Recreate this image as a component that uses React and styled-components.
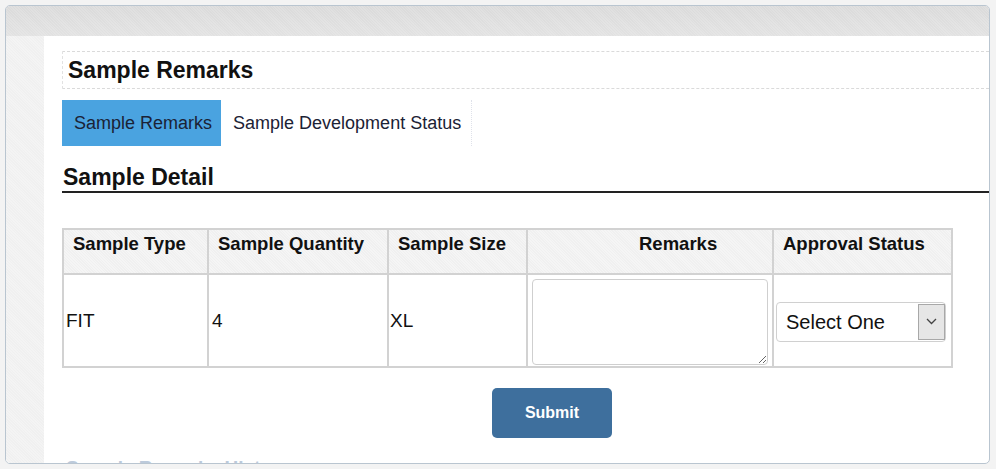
import React from 'react';
import styled, { createGlobalStyle } from 'styled-components';

const GlobalStyle = createGlobalStyle`
  html, body {
    margin: 0;
    padding: 0;
    background: #f3f3f3;
    font-family: "Liberation Sans", Arial, sans-serif;
  }
`;

const Frame = styled.div`
  margin: 5px 0 0 5px;
  width: 985px;
  height: 459px;
  box-sizing: border-box;
  border: 1.5px solid #b9c5d0;
  border-radius: 5px;
  background: #fff;
  overflow: hidden;
  display: flex;
  flex-direction: column;
`;

const TopBar = styled.div`
  height: 30px;
  flex-shrink: 0;
  background:
    repeating-linear-gradient(45deg, rgba(255,255,255,0.15) 0 1px, transparent 1px 2px),
    linear-gradient(#dadada, #e2e2e2);
`;

const Body = styled.div`
  flex: 1;
  display: flex;
  min-height: 0;
`;

const SideStrip = styled.div`
  width: 38px;
  flex-shrink: 0;
  background:
    repeating-linear-gradient(45deg, rgba(255,255,255,0.25) 0 1px, transparent 1px 2px),
    #f0f0f0;
`;

const Main = styled.div`
  flex: 1;
  padding: 15px 0 0 18px;
  overflow: hidden;
  display: flex;
  flex-direction: column;
  align-items: flex-start;

  & > * {
    flex-shrink: 0;
  }
`;

const TitleBox = styled.div`
  align-self: stretch;
  height: 38px;
  box-sizing: border-box;
  border-top: 1px dashed #dadada;
  border-bottom: 1px dashed #dadada;
  border-left: 1px dashed #e2e2e2;
  display: flex;
  align-items: center;
  padding-left: 5px;
`;

const Title = styled.h1`
  margin: 0;
  font-size: 23px;
  font-weight: bold;
  color: #111;
`;

const Tabs = styled.div`
  margin-top: 11px;
  display: flex;
  height: 46px;
  border: 1px dotted #dfe2ea;
  box-sizing: border-box;
`;

const Tab = styled.div`
  display: flex;
  align-items: center;
  padding: 0 ${p => (p.$active ? '9px' : '10px')} 0 12px;
  background: ${p => (p.$active ? '#4aa3e0' : '#fff')};
  color: #1b2235;
  font-size: 18px;
  margin-top: -1px;
  margin-bottom: -1px;
  margin-left: ${p => (p.$active ? '-1px' : '0')};
`;

const SectionHeading = styled.h2`
  align-self: stretch;
  margin: 17px 0 0;
  height: 28px;
  line-height: 28px;
  font-size: 23px;
  font-weight: bold;
  color: #111;
  padding-left: 1px;
  border-bottom: 2px solid #222;
`;

const Table = styled.table`
  margin-top: 35px;
  border-collapse: collapse;
  table-layout: fixed;
  width: 889px;
`;

const HeadCell = styled.th`
  height: 45px;
  box-sizing: border-box;
  border: 2px solid #d2d2d2;
  background:
    repeating-linear-gradient(45deg, rgba(255,255,255,0.3) 0 1px, transparent 1px 2px),
    #f0f0f0;
  font-size: 18.5px;
  font-weight: bold;
  color: #111;
  text-align: left;
  vertical-align: top;
  padding: 3px 0 0 ${p => p.$indent || 9}px;
  white-space: nowrap;
`;

const Cell = styled.td`
  height: 93px;
  box-sizing: border-box;
  border: 2px solid #d2d2d2;
  font-size: 19px;
  color: #111;
  padding: 0 0 0 ${p => p.$pad ?? 2}px;
  vertical-align: middle;
`;

const Remarks = styled.textarea`
  display: block;
  width: 236px;
  height: 86px;
  box-sizing: border-box;
  margin: 2px 0 0 4px;
  border: 1.5px solid #cfcfcf;
  border-radius: 4px;
  font-family: inherit;
  font-size: 16px;
`;

const SelectWrap = styled.div`
  position: relative;
  width: 170px;
  height: 40px;
  margin: 2px 0 0 2px;
`;

const Select = styled.select`
  appearance: none;
  width: 100%;
  height: 100%;
  box-sizing: border-box;
  border: 1.5px solid #d0d0d0;
  border-radius: 4px;
  background: #fff;
  padding: 0 0 0 9px;
  font-family: inherit;
  font-size: 20px;
  color: #111;
`;

const ArrowBox = styled.span`
  position: absolute;
  top: 2px;
  right: 1px;
  width: 27px;
  height: 36px;
  box-sizing: border-box;
  border: 1.5px solid #a8a8a8;
  background: #e6e6e6;
  display: flex;
  align-items: center;
  justify-content: center;
  pointer-events: none;
`;

const SubmitButton = styled.button`
  margin: 20px 0 0 430px;
  width: 120px;
  height: 50px;
  border: none;
  border-radius: 5px;
  background: #3e6f9d;
  color: #fff;
  font-family: inherit;
  font-size: 16px;
  font-weight: bold;
  cursor: pointer;
`;

const FaintLink = styled.div`
  margin: 20px 0 0 4px;
  font-size: 19px;
  line-height: 20px;
  font-weight: bold;
  color: #bccadb;
`;

function App() {
  return (
    <>
      <GlobalStyle />
      <Frame>
        <TopBar />
        <Body>
          <SideStrip />
          <Main>
            <TitleBox>
              <Title>Sample Remarks</Title>
            </TitleBox>
            <Tabs>
              <Tab $active>Sample Remarks</Tab>
              <Tab>Sample Development Status</Tab>
            </Tabs>
            <SectionHeading>Sample Detail</SectionHeading>
            <Table>
              <colgroup>
                <col style={{ width: 145 }} />
                <col style={{ width: 180 }} />
                <col style={{ width: 139 }} />
                <col style={{ width: 246 }} />
                <col style={{ width: 179 }} />
              </colgroup>
              <thead>
                <tr>
                  <HeadCell>Sample Type</HeadCell>
                  <HeadCell>Sample Quantity</HeadCell>
                  <HeadCell>Sample Size</HeadCell>
                  <HeadCell $indent={111}>Remarks</HeadCell>
                  <HeadCell>Approval Status</HeadCell>
                </tr>
              </thead>
              <tbody>
                <tr>
                  <Cell $pad={2}>FIT</Cell>
                  <Cell $pad={3}>4</Cell>
                  <Cell $pad={1}>XL</Cell>
                  <Cell $pad={0}>
                    <Remarks />
                  </Cell>
                  <Cell $pad={0}>
                    <SelectWrap>
                      <Select defaultValue="">
                        <option value="">Select One</option>
                        <option value="approved">Approved</option>
                        <option value="rejected">Rejected</option>
                      </Select>
                      <ArrowBox>
                        <svg width="11" height="7" viewBox="0 0 11 7">
                          <path d="M1 1l4.5 4.5L10 1" fill="none" stroke="#444" strokeWidth="1.3" />
                        </svg>
                      </ArrowBox>
                    </SelectWrap>
                  </Cell>
                </tr>
              </tbody>
            </Table>
            <SubmitButton type="button">Submit</SubmitButton>
            <FaintLink>Sample Remarks History</FaintLink>
          </Main>
        </Body>
      </Frame>
    </>
  );
}

export default App;
